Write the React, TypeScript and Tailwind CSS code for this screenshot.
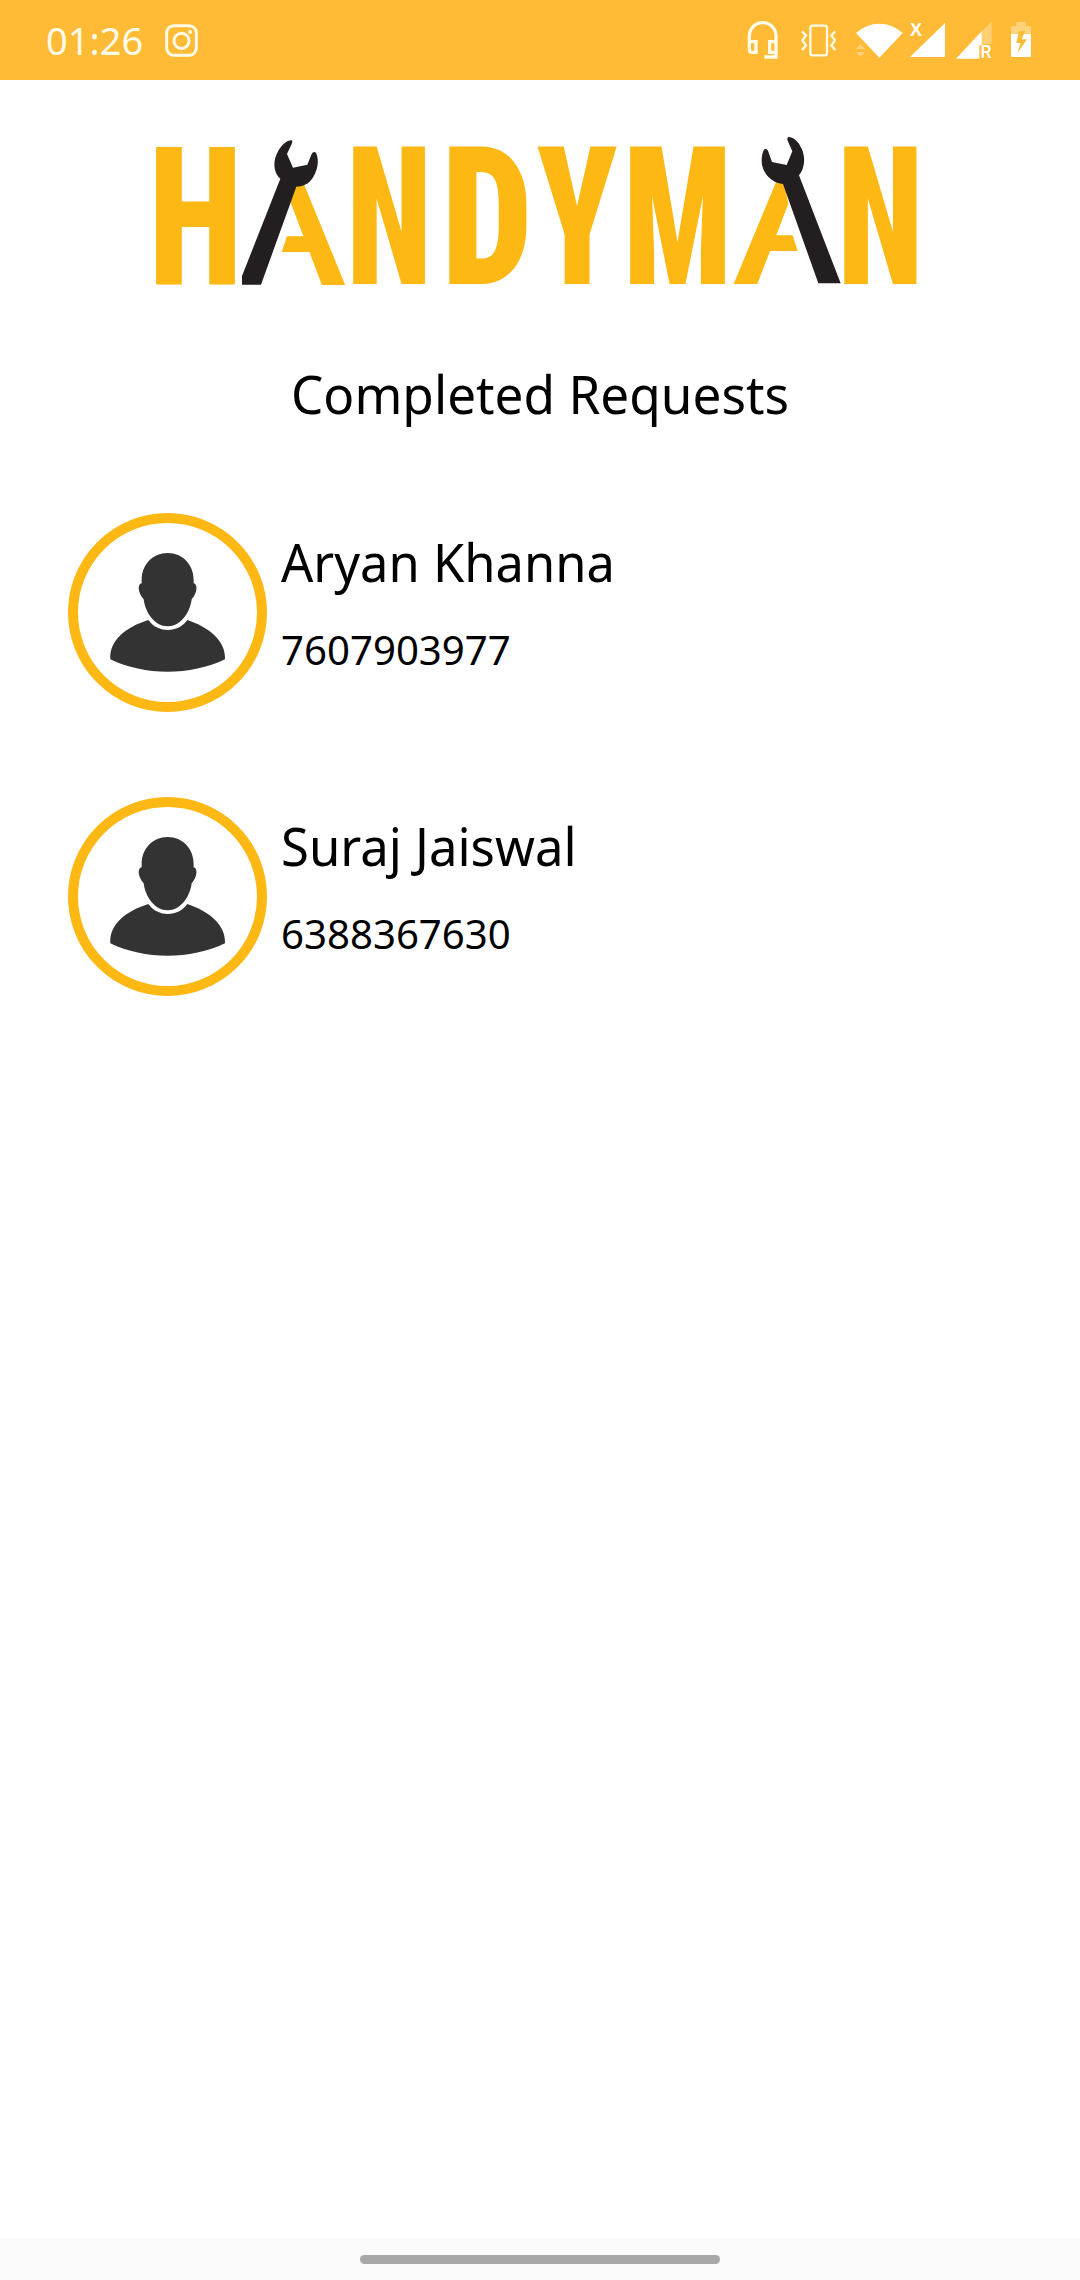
const requests = [
  { name: "Aryan Khanna", phone: "7607903977", nameClass: "origin-left scale-x-[0.964] text-[52.5px] leading-[60px]" },
  { name: "Suraj Jaiswal", phone: "6388367630", nameClass: "origin-left scale-x-[0.968] text-[52.5px] leading-[60px]" },
];

function StatusBar() {
  return (
    <header className="flex h-20 shrink-0 items-center bg-[#ffbb35] pr-12 pl-[46px] text-[#fffbe8]">
      <span className="w-[119px] text-[38px] leading-10">01:26</span>
      <svg viewBox="496 70 100 100" className="size-[33px]" fill="none" stroke="currentColor" strokeWidth="9">
        <rect x="501" y="75" width="90" height="90" rx="22" />
        <circle cx="546" cy="121" r="23" />
        <circle cx="572" cy="94" r="6" fill="currentColor" stroke="none" />
      </svg>
      <div className="ml-auto flex items-center">
        <svg viewBox="81 60 93 120" className="mr-[23px] h-10 w-[31px]" fill="none" stroke="currentColor" strokeWidth="10">
          <path d="M88 128V110C88 54 168 54 168 110V128M88 125H108V157H96Q88 157 88 148ZM168 125H149V157H168ZM168 150V171H133" />
        </svg>
        <svg viewBox="243 60 105 120" className="mr-[19px] h-10 w-[35px]" fill="none" stroke="currentColor" strokeWidth="7">
          <rect x="271" y="77" width="50" height="89" rx="7" />
          <path d="M246 94L258 106L247 121L258 136L246 150M346 94L334 106L345 121L334 136L346 150" />
        </svg>
        <svg viewBox="405 60 144 120" className="mr-[7px] h-10 w-12" fill="white">
          <path d="M408 99Q440 71 478 71T548 99L478 173Z" />
          <path d="M408 147L421 133L435 147ZM408 156H435L421 170Z" opacity=".35" />
        </svg>
        <svg viewBox="570 60 105 120" className="mr-[11px] h-10 w-[35px]" fill="white">
          <path d="M570 171L675 69V167Q675 171 671 171Z" />
          <text x="570" y="107" className="font-['Liberation_Sans'] text-[54px] font-bold">X</text>
        </svg>
        <svg viewBox="708 60 111 120" className="mr-[17px] h-10 w-[37px]" fill="white">
          <path d="M815 65V132H785V94Z" opacity=".3" />
          <path d="M708 176L785 94V136H778V176Z" />
          <text transform="translate(782 175) scale(.82 1)" className="font-['Liberation_Sans'] text-[54px] font-bold">R</text>
        </svg>
        <svg viewBox="870 60 66 120" className="h-10 w-[22px]" fill="white">
          <path d="M873 102V82Q873 78 877 78H889V66H918V78H929Q933 78 933 82V102Z" opacity=".35" />
          <path d="M873 102H933V167Q933 171 929 171H877Q873 171 873 167Z" />
          <path d="M897 93L889 129H902L892 160L921 118H905L915 93Z" fill="#ffbb35" />
        </svg>
      </div>
    </header>
  );
}

const letters = [
  { char: "H", transform: "translate(148.8 284) scale(.795 1)" },
  { char: "N", transform: "translate(346.5 284) scale(.725 1)" },
  { char: "D", transform: "translate(441.5 284) scale(.839 1)" },
  { char: "Y", transform: "translate(536.7 284) scale(.757 1)" },
  { char: "M", transform: "translate(623.3 284) scale(.742 1)" },
  { char: "N", transform: "translate(837.4 284) scale(.73 1)" },
];

function Logo() {
  return (
    <svg viewBox="150 130 780 160" className="ml-[150px] h-[160px] w-[780px]" fill="#fdb813">
      <defs>
        <clipPath id="rightLeg">
          <path d="M290 184H350V290H276L281 254L286.7 237L290 222L291 200Z" />
        </clipPath>
        <clipPath id="leftLeg">
          <path d="M730 180H784L788 203L789 215L792.5 235L798 252V290H730Z" />
        </clipPath>
      </defs>
      {letters.map((l, i) => (
        <text key={i} transform={l.transform} className="font-['Roboto'] text-[193px] font-black [font-stretch:condensed]">
          {l.char}
        </text>
      ))}
      <g stroke="#fdb813" strokeWidth="2" className="font-['Roboto'] text-[193px] [font-stretch:condensed]">
        <g clipPath="url(#rightLeg)">
          <text transform="translate(348.2 284) scale(1.17 .92)" textAnchor="end">A</text>
        </g>
        <g clipPath="url(#leftLeg)">
          <text transform="translate(730.4 282.6) scale(1.19 .92)">A</text>
        </g>
      </g>
      <g fill="#231f20">
        <path transform="translate(140 120) scale(.33333)" d="M306 468L421 176C398 156 400 120 412 98C424 74 442 60 456 61Q458 64 455 72L441 102L459 143L502 134L515 102Q520 92 528 98C538 120 534 150 518 174C506 192 488 200 469 200L363 494H306Z" />
        <path transform="translate(680 120) scale(.33333)" d="M415 490L309 192C286 190 262 176 250 148C242 126 244 102 253 88Q260 84 264 92L276 126L320 135L337 94L323 62Q320 54 325 51C342 52 356 66 366 88C378 118 372 148 357 166L482 490Z" />
      </g>
    </svg>
  );
}

function Avatar() {
  return (
    <div className="size-[199px] shrink-0 rounded-full border-10 border-[#fdb813]">
      <svg viewBox="84 69 537 537" className="size-full" fill="#333333">
        <path d="M353 159C308 159 275 194 275 240V250C262 252 263 278 281 298C286 338 314 379 353 379S420 338 425 298C443 278 443 252 431 250V240C431 194 398 159 353 159Z" />
        <path d="M295 360C228 381 177 421 181 478C283 528 422 528 525 478C528 421 475 381 412 360C386 399 324 401 295 360Z" />
      </svg>
    </div>
  );
}

export default function App() {
  return (
    <div className="flex h-[2280px] w-[1080px] flex-col bg-white font-['Noto_Sans',sans-serif] text-black">
      <StatusBar />
      <main className="flex grow flex-col pt-[50px]">
        <Logo />
        <h1 className="mt-[74px] scale-x-[0.977] text-center text-[52.5px] leading-[60px]">Completed Requests</h1>
        <ul className="mt-[89px] flex flex-col gap-[85px] pl-17">
          {requests.map((r) => (
            <li key={r.name} className="flex h-[199px] gap-[14px]">
              <Avatar />
              <div className="pt-[19px]">
                <h2 className={r.nameClass}>{r.name}</h2>
                <p className="mt-[34px] origin-left scale-x-[1.017] text-[39.5px] leading-12">{r.phone}</p>
              </div>
            </li>
          ))}
        </ul>
      </main>
      <footer className="flex h-[42px] shrink-0 justify-center bg-[#fafafa] pt-[17px]">
        <div className="h-[9px] w-[360px] rounded-full bg-[#a8a8a8]" />
      </footer>
    </div>
  );
}
